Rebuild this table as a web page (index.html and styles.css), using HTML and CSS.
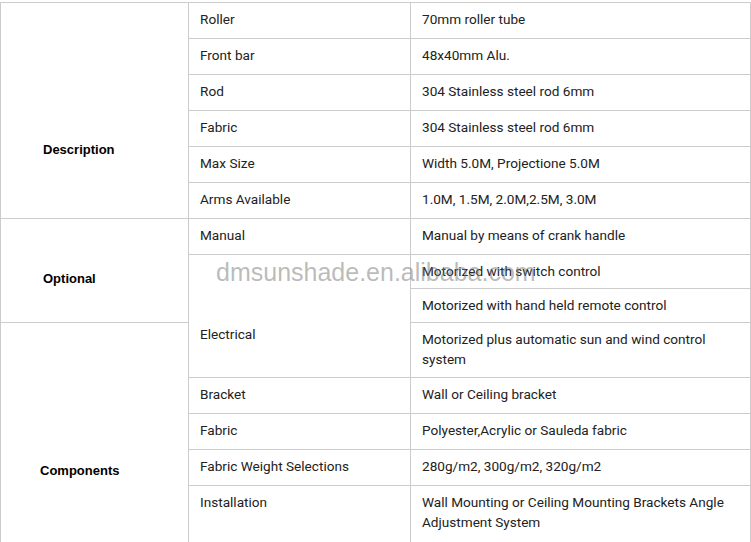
FILE: index.html
```html
<!DOCTYPE html>
<html lang="en">
<head>
<meta charset="utf-8">
<title>Specifications</title>
<link rel="stylesheet" href="styles.css">
</head>
<body>
<div class="page">
  <table class="spec">
    <colgroup>
      <col class="c1">
      <col class="c2">
      <col class="c3">
    </colgroup>
    <tbody>
      <tr>
        <td class="group g-desc" rowspan="6">Description</td>
        <td>Roller</td>
        <td>70mm roller tube</td>
      </tr>
      <tr><td>Front bar</td><td>48x40mm Alu.</td></tr>
      <tr><td>Rod</td><td>304 Stainless steel rod 6mm</td></tr>
      <tr><td>Fabric</td><td>304 Stainless steel rod 6mm</td></tr>
      <tr><td>Max Size</td><td>Width 5.0M, Projectione 5.0M</td></tr>
      <tr><td>Arms Available</td><td>1.0M, 1.5M, 2.0M,2.5M, 3.0M</td></tr>
      <tr>
        <td class="group g-opt" rowspan="3">Optional</td>
        <td>Manual</td>
        <td>Manual by means of crank handle</td>
      </tr>
      <tr class="short">
        <td class="elec" rowspan="3">Electrical</td>
        <td>Motorized with switch control</td>
      </tr>
      <tr class="short"><td>Motorized with hand held remote control</td></tr>
      <tr class="double">
        <td class="group g-comp" rowspan="5">Components</td>
        <td>Motorized plus automatic sun and wind control system</td>
      </tr>
      <tr><td>Bracket</td><td>Wall or Ceiling bracket</td></tr>
      <tr><td>Fabric</td><td>Polyester,Acrylic or Sauleda fabric</td></tr>
      <tr><td>Fabric Weight Selections</td><td>280g/m2, 300g/m2, 320g/m2</td></tr>
      <tr class="last"><td>Installation</td><td>Wall Mounting or Ceiling Mounting Brackets Angle Adjustment System</td></tr>
    </tbody>
  </table>
  <div class="watermark">dmsunshade.en.alibaba.com</div>
</div>
</body>
</html>
```
FILE: styles.css
```css
html, body {
  margin: 0;
  padding: 0;
  background: #ffffff;
}

body {
  overflow: hidden;
}

.page {
  position: relative;
  padding-top: 2px;
}

.spec {
  width: 750px;
  table-layout: fixed;
  border-collapse: collapse;
  font-family: Roboto, "Liberation Sans", Arial, sans-serif;
  font-size: 13.6px;
  line-height: 20px;
  color: #222222;
}

.c1 { width: 188px; }
.c2 { width: 222px; }
.c3 { width: 340px; }

.spec td {
  border: 1px solid #cccccc;
  padding: 6px 11px 9px 11px;
  vertical-align: top;
  text-align: left;
}

.spec tr.short td {
  padding-top: 6px;
  padding-bottom: 7px;
}

.spec tr.double td {
  padding-bottom: 8px;
}

.spec tr.last td {
  padding-bottom: 40px;
}

.spec td.group {
  font-family: "Liberation Sans", Arial, sans-serif;
  font-weight: bold;
  font-size: 13px;
  color: #000000;
  padding-left: 42px;
}

.spec td.g-desc { padding-top: 137px; }
.spec td.g-opt { padding-top: 50px; }
.spec td.g-comp { padding-top: 138px; padding-left: 39px; }

.spec tr.short td.elec {
  padding-top: 69px;
}

.watermark {
  position: absolute;
  left: 216px;
  top: 260px;
  font-family: "Liberation Sans", Arial, sans-serif;
  font-size: 25px;
  line-height: 25px;
  color: rgba(120, 120, 120, 0.5);
  white-space: nowrap;
  pointer-events: none;
}
```
